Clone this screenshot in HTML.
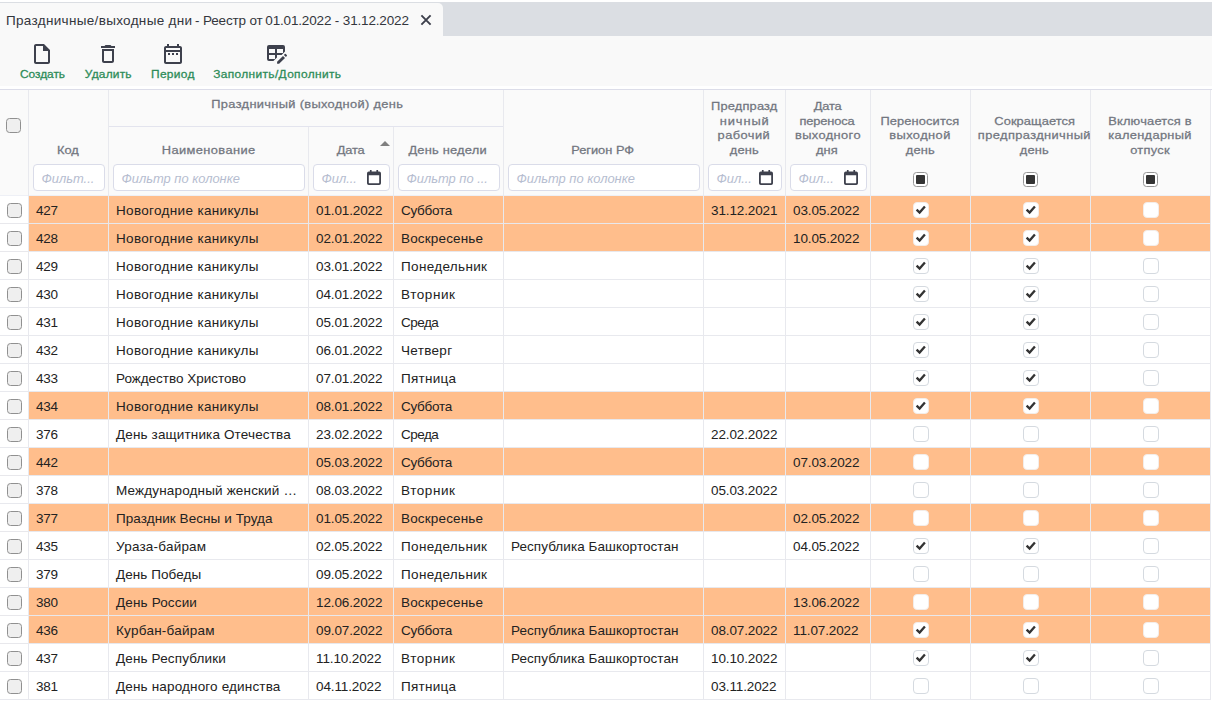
<!DOCTYPE html>
<html lang="ru"><head><meta charset="utf-8"><title>Праздничные/выходные дни</title>
<style>
*{box-sizing:border-box;margin:0;padding:0}
html,body{width:1212px;height:702px;overflow:hidden;background:#fff}
body{position:relative;font-family:"Liberation Sans",sans-serif;font-size:13.5px;color:#222;-webkit-font-smoothing:antialiased}
.tabbar{position:absolute;left:0;top:2px;width:1212px;height:34px;background:#dbdee3}
.tab{position:absolute;left:0;top:1px;width:443px;height:33px;background:#f9f9f9;border-top-right-radius:5px}
.tab .tt{position:absolute;left:6px;top:1px;line-height:33px;white-space:nowrap;color:#33363d;letter-spacing:0}
.tab svg{position:absolute;left:420px;top:11px;width:12px;height:12px}
.toolbar{position:absolute;left:0;top:36px;width:1212px;height:50px;background:#f9f9f9}
.ic{position:absolute;top:6px;width:24px;height:24px;fill:#3e414d}
.bl{position:absolute;width:200px;text-align:center;top:31px;line-height:15px;font-size:10.85px;color:#2d8c58;white-space:nowrap;-webkit-text-stroke:0.28px #2d8c58}
.hline{position:absolute;left:0;height:1px;background:#dcdde9}
.head{position:absolute;left:0;top:90px;width:1210px;height:105px;background:#fafafa}
.hl{position:absolute;width:200px;text-align:center;font-size:11.7px;color:#72767f;line-height:14px;white-space:nowrap;-webkit-text-stroke:0.27px #72767f}
.hl span{display:inline-block;transform:scaleX(1.1)}
.bl span{display:inline-block;transform:scaleX(1.1)}
.fi{position:absolute;top:164px;height:27px;border:1px solid #dadce9;border-radius:4px;background:#fff;font-style:italic;color:#b6bdd0;font-size:12.9px;line-height:27px;padding-left:7.5px;white-space:nowrap;overflow:hidden}
.fi svg{position:absolute;right:8px;top:5px;width:14px;height:15px;fill:#3e414d}
.hcb{position:absolute;width:15px;height:15px;border:1px solid #909090;border-radius:3.5px;background:#efefef}
.icb{position:absolute;top:172px;width:15px;height:15px;border:1px solid #969696;border-radius:3.5px;background:#fff}
.icb i{position:absolute;left:2px;top:2px;width:9px;height:9px;background:#333;border-radius:1px}
.sort{position:absolute;left:380px;top:141px;width:0;height:0;border-left:5px solid transparent;border-right:5px solid transparent;border-bottom:5px solid #808080}
.body{position:absolute;left:0;top:0;width:1212px;height:702px}
.row{position:absolute;left:0;width:1210px;height:28px;border-bottom:1px solid #e8e9ee}
.row .c{position:absolute;top:0;height:27px;line-height:29px;white-space:nowrap;overflow:hidden;padding-left:7px}
.row.o .c{background:#ffbe8c}
.row.o{border-bottom-color:#e8e8ec}
.row .c0{left:0;width:28px;padding:0;background:#fff !important}
.row .d{letter-spacing:-0.12px;padding-left:7px}
.row .b{padding:0}
.cb0{position:absolute;left:7px;top:7px;width:15px;height:15px;border:1px solid #909090;border-radius:3.5px;background:#efefef}
.cb{position:absolute;left:50%;margin-left:-8px;top:6px;width:16px;height:16px;border:1px solid #d5dae0;border-radius:4px;background:#fff}
.row.o .cb{border-color:#f3ede9}
.cb svg{position:absolute;left:-1px;top:-1px;width:16px;height:16px;fill:none;stroke:#333;stroke-width:2.3}
.vl{position:absolute;top:90px;width:1px;height:610px;background:#e8e9ee}
.row .k{letter-spacing:-0.2px}
</style></head>
<body>
<div class="tabbar"><div class="tab"><span class="tt" style="left:5.900px;letter-spacing:0.33px">Праздничные/выходные дни </span><span class="tt" style="left:195px;letter-spacing:-0.15px">- Реестр от </span><span class="tt" style="left:265.300px;letter-spacing:-0.16px">01.01.2022 - 31.12.2022</span><svg viewBox="0 0 12 12"><path d="M1.400 1.400 10.600 10.600M10.600 1.400 1.400 10.600" stroke="#3c3f4b" stroke-width="1.900" fill="none"/></svg></div></div>
<div class="toolbar">
<svg class="ic" style="left:30px" viewBox="0 0 24 24"><path d="M14 2H6c-1.100 0-1.990.9-1.990 2L4 20c0 1.100.89 2 1.990 2H18c1.100 0 2-.9 2-2V8l-6-6zM6 20V4h7v5h5v11H6z"/></svg><div class="bl" style="left:-57.35px"><span style="letter-spacing:-0.04px;margin-left:-0.04px">Создать</span></div>
<svg class="ic" style="left:96px" viewBox="0 0 24 24"><path d="M6 19c0 1.100.9 2 2 2h8c1.100 0 2-.9 2-2V7H6v12zM8 9h8v10H8V9zm7.500-5l-1-1h-5l-1 1H5v2h14V4h-3.500z"/></svg><div class="bl" style="left:8px"><span style="letter-spacing:0.17px;margin-left:0.17px">Удалить</span></div>
<svg class="ic" style="left:161px" viewBox="0 0 24 24"><path d="M7 11h2v2H7v-2zm14-5v14c0 1.100-.9 2-2 2H5c-1.110 0-2-.9-2-2l.01-14c0-1.100.88-2 1.990-2h1V2h2v2h8V2h2v2h1c1.100 0 2 .9 2 2zM5 8h14V6H5v2zm14 12V10H5v10h14zm-4-7h2v-2h-2v2zm-4 0h2v-2h-2v2z"/></svg><div class="bl" style="left:72.75px"><span style="letter-spacing:0.27px;margin-left:0.27px">Период</span></div>
<svg class="ic" style="left:265px" viewBox="0 0 24 24"><path fill-rule="evenodd" d="M4 3h14a2 2 0 0 1 2 2v4.600l-3.400 3.400H12v2.400L8.400 19H4a2 2 0 0 1-2-2V5a2 2 0 0 1 2-2zM4 7v4h6V7zM12 7v4h6V7zM4 13v4h6v-4z"/><path d="M12.100 21.800v-2l5.900-5.900 2 2-5.900 5.900zM18.900 13l.9-.9a.7.7 0 0 1 1 0l1 1a.7.7 0 0 1 0 1l-.9.900z"/></svg><div class="bl" style="left:176.9px"><span style="letter-spacing:0.32px;margin-left:0.32px">Заполнить/Дополнить</span></div>
</div>
<div class="hline" style="top:89px;width:1212px"></div>
<div class="head"></div>
<div class="hline" style="top:126px;left:109px;width:394px;background:#e3e4ee"></div>
<div class="hline" style="top:195px;width:1210px;background:#eef0f6"></div>
<div class="hcb" style="left:6px;top:118px"></div>
<div class="hl" style="left:-32.05px;top:143px"><span style="letter-spacing:-0.05px;margin-left:-0.05px">Код</span></div>
<div class="hl" style="left:207px;top:97px"><span style="letter-spacing:0.29px;margin-left:0.29px">Праздничный (выходной) день</span></div>
<div class="hl" style="left:108px;top:143px"><span style="letter-spacing:0.36px;margin-left:0.36px">Наименование</span></div>
<div class="hl" style="left:250.3px;top:143px"><span style="letter-spacing:-0.15px;margin-left:-0.15px">Дата</span></div>
<div class="hl" style="left:348px;top:143px"><span style="letter-spacing:0.19px;margin-left:0.19px">День недели</span></div>
<div class="hl" style="left:503px;top:143px"><span style="letter-spacing:-0.01px;margin-left:-0.01px">Регион РФ</span></div>
<div class="hl" style="left:644.4px;top:99px"><span style="letter-spacing:0.16px;margin-left:0.16px">Предпразд</span></div>
<div class="hl" style="left:644.175px;top:114px"><span style="letter-spacing:0.83px;margin-left:0.83px">ничный</span></div>
<div class="hl" style="left:643.95px;top:128px"><span style="letter-spacing:0.39px;margin-left:0.39px">рабочий</span></div>
<div class="hl" style="left:643.95px;top:143px"><span style="letter-spacing:0.21px;margin-left:0.21px">день</span></div>
<div class="hl" style="left:727.3px;top:99px"><span style="letter-spacing:-0.15px;margin-left:-0.15px">Дата</span></div>
<div class="hl" style="left:727.35px;top:114px"><span style="letter-spacing:-0.13px;margin-left:-0.13px">переноса</span></div>
<div class="hl" style="left:727.6px;top:128px"><span style="letter-spacing:0.34px;margin-left:0.34px">выходного</span></div>
<div class="hl" style="left:727.35px;top:143px"><span style="letter-spacing:0.05px;margin-left:0.05px">дня</span></div>
<div class="hl" style="left:820.2px;top:114px"><span style="letter-spacing:0.11px;margin-left:0.11px">Переносится</span></div>
<div class="hl" style="left:820.15px;top:128px"><span style="letter-spacing:0.39px;margin-left:0.39px">выходной</span></div>
<div class="hl" style="left:819.9px;top:143px"><span style="letter-spacing:0.21px;margin-left:0.21px">день</span></div>
<div class="hl" style="left:934.4px;top:114px"><span style="letter-spacing:0.06px;margin-left:0.06px">Сокращается</span></div>
<div class="hl" style="left:933.8px;top:128px"><span style="letter-spacing:0.35px;margin-left:0.35px">предпраздничный</span></div>
<div class="hl" style="left:934px;top:143px"><span style="letter-spacing:0.21px;margin-left:0.21px">день</span></div>
<div class="hl" style="left:1050.05px;top:114px"><span style="letter-spacing:0.17px;margin-left:0.17px">Включается в</span></div>
<div class="hl" style="left:1050.05px;top:128px"><span style="letter-spacing:0.29px;margin-left:0.29px">календарный</span></div>
<div class="hl" style="left:1049.9px;top:143px"><span style="letter-spacing:0.24px;margin-left:0.24px">отпуск</span></div>
<div class="sort"></div>
<div class="fi" style="left:33px;width:72px">Фильт...</div>
<div class="fi" style="left:113px;width:192px">Фильтр по колонке</div>
<div class="fi" style="left:313px;width:77px">Фил...<svg viewBox="0 0 14 15"><path fill-rule="evenodd" d="M2.900 0h1.700v1.600h4.800V0h1.700v1.600h1.100a1.800 1.800 0 0 1 1.800 1.800v9.800a1.800 1.800 0 0 1-1.800 1.800H1.800A1.800 1.800 0 0 1 0 13.200V3.400a1.800 1.800 0 0 1 1.800-1.800h1.100zM1.800 5.300v7.500a.4.4 0 0 0 .4.4h9.600a.4.4 0 0 0 .4-.4V5.300z"/></svg></div>
<div class="fi" style="left:398px;width:102px">Фильтр по ...</div>
<div class="fi" style="left:508px;width:192px">Фильтр по колонке</div>
<div class="fi" style="left:708px;width:74px">Фил...<svg viewBox="0 0 14 15"><path fill-rule="evenodd" d="M2.900 0h1.700v1.600h4.800V0h1.700v1.600h1.100a1.800 1.800 0 0 1 1.800 1.800v9.800a1.800 1.800 0 0 1-1.800 1.800H1.800A1.800 1.800 0 0 1 0 13.200V3.400a1.800 1.800 0 0 1 1.800-1.800h1.100zM1.800 5.300v7.500a.4.4 0 0 0 .4.4h9.600a.4.4 0 0 0 .4-.4V5.300z"/></svg></div>
<div class="fi" style="left:790px;width:77px">Фил...<svg viewBox="0 0 14 15"><path fill-rule="evenodd" d="M2.900 0h1.700v1.600h4.800V0h1.700v1.600h1.100a1.800 1.800 0 0 1 1.800 1.800v9.800a1.800 1.800 0 0 1-1.800 1.800H1.800A1.800 1.800 0 0 1 0 13.200V3.400a1.800 1.800 0 0 1 1.800-1.800h1.100zM1.800 5.300v7.500a.4.4 0 0 0 .4.4h9.600a.4.4 0 0 0 .4-.4V5.300z"/></svg></div>
<div class="icb" style="left:913px"><i></i></div>
<div class="icb" style="left:1023px"><i></i></div>
<div class="icb" style="left:1143px"><i></i></div>
<div class="body">
<div class="row o" style="top:196px"><div class="c c0"><span class="cb0"></span></div><div class="c k" style="left:29px;width:79px">427</div><div class="c t" style="left:109px;width:199px;letter-spacing:0.33px">Новогодние каникулы</div><div class="c d" style="left:309px;width:84px">01.01.2022</div><div class="c t" style="left:394px;width:109px;letter-spacing:-0.28px">Суббота</div><div class="c t" style="left:504px;width:199px"></div><div class="c d" style="left:704px;width:81px">31.12.2021</div><div class="c d" style="left:786px;width:84px">03.05.2022</div><div class="c b" style="left:871px;width:99px"><span class="cb on"><svg viewBox="0 0 16 16"><path d="M3.600 7.600 6.600 10.600 11.900 4.400"/></svg></span></div><div class="c b" style="left:971px;width:119px"><span class="cb on"><svg viewBox="0 0 16 16"><path d="M3.600 7.600 6.600 10.600 11.900 4.400"/></svg></span></div><div class="c b" style="left:1091px;width:119px"><span class="cb"></span></div></div>
<div class="row o" style="top:224px"><div class="c c0"><span class="cb0"></span></div><div class="c k" style="left:29px;width:79px">428</div><div class="c t" style="left:109px;width:199px;letter-spacing:0.33px">Новогодние каникулы</div><div class="c d" style="left:309px;width:84px">02.01.2022</div><div class="c t" style="left:394px;width:109px;letter-spacing:0.16px">Воскресенье</div><div class="c t" style="left:504px;width:199px"></div><div class="c d" style="left:704px;width:81px"></div><div class="c d" style="left:786px;width:84px">10.05.2022</div><div class="c b" style="left:871px;width:99px"><span class="cb on"><svg viewBox="0 0 16 16"><path d="M3.600 7.600 6.600 10.600 11.900 4.400"/></svg></span></div><div class="c b" style="left:971px;width:119px"><span class="cb on"><svg viewBox="0 0 16 16"><path d="M3.600 7.600 6.600 10.600 11.900 4.400"/></svg></span></div><div class="c b" style="left:1091px;width:119px"><span class="cb"></span></div></div>
<div class="row" style="top:252px"><div class="c c0"><span class="cb0"></span></div><div class="c k" style="left:29px;width:79px">429</div><div class="c t" style="left:109px;width:199px;letter-spacing:0.33px">Новогодние каникулы</div><div class="c d" style="left:309px;width:84px">03.01.2022</div><div class="c t" style="left:394px;width:109px;letter-spacing:0.34px">Понедельник</div><div class="c t" style="left:504px;width:199px"></div><div class="c d" style="left:704px;width:81px"></div><div class="c d" style="left:786px;width:84px"></div><div class="c b" style="left:871px;width:99px"><span class="cb on"><svg viewBox="0 0 16 16"><path d="M3.600 7.600 6.600 10.600 11.900 4.400"/></svg></span></div><div class="c b" style="left:971px;width:119px"><span class="cb on"><svg viewBox="0 0 16 16"><path d="M3.600 7.600 6.600 10.600 11.900 4.400"/></svg></span></div><div class="c b" style="left:1091px;width:119px"><span class="cb"></span></div></div>
<div class="row" style="top:280px"><div class="c c0"><span class="cb0"></span></div><div class="c k" style="left:29px;width:79px">430</div><div class="c t" style="left:109px;width:199px;letter-spacing:0.33px">Новогодние каникулы</div><div class="c d" style="left:309px;width:84px">04.01.2022</div><div class="c t" style="left:394px;width:109px;letter-spacing:0.58px">Вторник</div><div class="c t" style="left:504px;width:199px"></div><div class="c d" style="left:704px;width:81px"></div><div class="c d" style="left:786px;width:84px"></div><div class="c b" style="left:871px;width:99px"><span class="cb on"><svg viewBox="0 0 16 16"><path d="M3.600 7.600 6.600 10.600 11.900 4.400"/></svg></span></div><div class="c b" style="left:971px;width:119px"><span class="cb on"><svg viewBox="0 0 16 16"><path d="M3.600 7.600 6.600 10.600 11.900 4.400"/></svg></span></div><div class="c b" style="left:1091px;width:119px"><span class="cb"></span></div></div>
<div class="row" style="top:308px"><div class="c c0"><span class="cb0"></span></div><div class="c k" style="left:29px;width:79px">431</div><div class="c t" style="left:109px;width:199px;letter-spacing:0.33px">Новогодние каникулы</div><div class="c d" style="left:309px;width:84px">05.01.2022</div><div class="c t" style="left:394px;width:109px;letter-spacing:-0.53px">Среда</div><div class="c t" style="left:504px;width:199px"></div><div class="c d" style="left:704px;width:81px"></div><div class="c d" style="left:786px;width:84px"></div><div class="c b" style="left:871px;width:99px"><span class="cb on"><svg viewBox="0 0 16 16"><path d="M3.600 7.600 6.600 10.600 11.900 4.400"/></svg></span></div><div class="c b" style="left:971px;width:119px"><span class="cb on"><svg viewBox="0 0 16 16"><path d="M3.600 7.600 6.600 10.600 11.900 4.400"/></svg></span></div><div class="c b" style="left:1091px;width:119px"><span class="cb"></span></div></div>
<div class="row" style="top:336px"><div class="c c0"><span class="cb0"></span></div><div class="c k" style="left:29px;width:79px">432</div><div class="c t" style="left:109px;width:199px;letter-spacing:0.33px">Новогодние каникулы</div><div class="c d" style="left:309px;width:84px">06.01.2022</div><div class="c t" style="left:394px;width:109px;letter-spacing:0.32px">Четверг</div><div class="c t" style="left:504px;width:199px"></div><div class="c d" style="left:704px;width:81px"></div><div class="c d" style="left:786px;width:84px"></div><div class="c b" style="left:871px;width:99px"><span class="cb on"><svg viewBox="0 0 16 16"><path d="M3.600 7.600 6.600 10.600 11.900 4.400"/></svg></span></div><div class="c b" style="left:971px;width:119px"><span class="cb on"><svg viewBox="0 0 16 16"><path d="M3.600 7.600 6.600 10.600 11.900 4.400"/></svg></span></div><div class="c b" style="left:1091px;width:119px"><span class="cb"></span></div></div>
<div class="row" style="top:364px"><div class="c c0"><span class="cb0"></span></div><div class="c k" style="left:29px;width:79px">433</div><div class="c t" style="left:109px;width:199px;letter-spacing:-0.02px">Рождество Христово</div><div class="c d" style="left:309px;width:84px">07.01.2022</div><div class="c t" style="left:394px;width:109px;letter-spacing:0.28px">Пятница</div><div class="c t" style="left:504px;width:199px"></div><div class="c d" style="left:704px;width:81px"></div><div class="c d" style="left:786px;width:84px"></div><div class="c b" style="left:871px;width:99px"><span class="cb on"><svg viewBox="0 0 16 16"><path d="M3.600 7.600 6.600 10.600 11.900 4.400"/></svg></span></div><div class="c b" style="left:971px;width:119px"><span class="cb on"><svg viewBox="0 0 16 16"><path d="M3.600 7.600 6.600 10.600 11.900 4.400"/></svg></span></div><div class="c b" style="left:1091px;width:119px"><span class="cb"></span></div></div>
<div class="row o" style="top:392px"><div class="c c0"><span class="cb0"></span></div><div class="c k" style="left:29px;width:79px">434</div><div class="c t" style="left:109px;width:199px;letter-spacing:0.33px">Новогодние каникулы</div><div class="c d" style="left:309px;width:84px">08.01.2022</div><div class="c t" style="left:394px;width:109px;letter-spacing:-0.28px">Суббота</div><div class="c t" style="left:504px;width:199px"></div><div class="c d" style="left:704px;width:81px"></div><div class="c d" style="left:786px;width:84px"></div><div class="c b" style="left:871px;width:99px"><span class="cb on"><svg viewBox="0 0 16 16"><path d="M3.600 7.600 6.600 10.600 11.900 4.400"/></svg></span></div><div class="c b" style="left:971px;width:119px"><span class="cb on"><svg viewBox="0 0 16 16"><path d="M3.600 7.600 6.600 10.600 11.900 4.400"/></svg></span></div><div class="c b" style="left:1091px;width:119px"><span class="cb"></span></div></div>
<div class="row" style="top:420px"><div class="c c0"><span class="cb0"></span></div><div class="c k" style="left:29px;width:79px">376</div><div class="c t" style="left:109px;width:199px;letter-spacing:0.14px">День защитника Отечества</div><div class="c d" style="left:309px;width:84px">23.02.2022</div><div class="c t" style="left:394px;width:109px;letter-spacing:-0.53px">Среда</div><div class="c t" style="left:504px;width:199px"></div><div class="c d" style="left:704px;width:81px">22.02.2022</div><div class="c d" style="left:786px;width:84px"></div><div class="c b" style="left:871px;width:99px"><span class="cb"></span></div><div class="c b" style="left:971px;width:119px"><span class="cb"></span></div><div class="c b" style="left:1091px;width:119px"><span class="cb"></span></div></div>
<div class="row o" style="top:448px"><div class="c c0"><span class="cb0"></span></div><div class="c k" style="left:29px;width:79px">442</div><div class="c t" style="left:109px;width:199px"></div><div class="c d" style="left:309px;width:84px">05.03.2022</div><div class="c t" style="left:394px;width:109px;letter-spacing:-0.28px">Суббота</div><div class="c t" style="left:504px;width:199px"></div><div class="c d" style="left:704px;width:81px"></div><div class="c d" style="left:786px;width:84px">07.03.2022</div><div class="c b" style="left:871px;width:99px"><span class="cb"></span></div><div class="c b" style="left:971px;width:119px"><span class="cb"></span></div><div class="c b" style="left:1091px;width:119px"><span class="cb"></span></div></div>
<div class="row" style="top:476px"><div class="c c0"><span class="cb0"></span></div><div class="c k" style="left:29px;width:79px">378</div><div class="c t" style="left:109px;width:199px;letter-spacing:0.16px">Международный женский …</div><div class="c d" style="left:309px;width:84px">08.03.2022</div><div class="c t" style="left:394px;width:109px;letter-spacing:0.58px">Вторник</div><div class="c t" style="left:504px;width:199px"></div><div class="c d" style="left:704px;width:81px">05.03.2022</div><div class="c d" style="left:786px;width:84px"></div><div class="c b" style="left:871px;width:99px"><span class="cb"></span></div><div class="c b" style="left:971px;width:119px"><span class="cb"></span></div><div class="c b" style="left:1091px;width:119px"><span class="cb"></span></div></div>
<div class="row o" style="top:504px"><div class="c c0"><span class="cb0"></span></div><div class="c k" style="left:29px;width:79px">377</div><div class="c t" style="left:109px;width:199px;letter-spacing:0.07px">Праздник Весны и Труда</div><div class="c d" style="left:309px;width:84px">01.05.2022</div><div class="c t" style="left:394px;width:109px;letter-spacing:0.16px">Воскресенье</div><div class="c t" style="left:504px;width:199px"></div><div class="c d" style="left:704px;width:81px"></div><div class="c d" style="left:786px;width:84px">02.05.2022</div><div class="c b" style="left:871px;width:99px"><span class="cb"></span></div><div class="c b" style="left:971px;width:119px"><span class="cb"></span></div><div class="c b" style="left:1091px;width:119px"><span class="cb"></span></div></div>
<div class="row" style="top:532px"><div class="c c0"><span class="cb0"></span></div><div class="c k" style="left:29px;width:79px">435</div><div class="c t" style="left:109px;width:199px;letter-spacing:0.21px">Ураза-байрам</div><div class="c d" style="left:309px;width:84px">02.05.2022</div><div class="c t" style="left:394px;width:109px;letter-spacing:0.34px">Понедельник</div><div class="c t" style="left:504px;width:199px;letter-spacing:0.06px">Республика Башкортостан</div><div class="c d" style="left:704px;width:81px"></div><div class="c d" style="left:786px;width:84px">04.05.2022</div><div class="c b" style="left:871px;width:99px"><span class="cb on"><svg viewBox="0 0 16 16"><path d="M3.600 7.600 6.600 10.600 11.900 4.400"/></svg></span></div><div class="c b" style="left:971px;width:119px"><span class="cb on"><svg viewBox="0 0 16 16"><path d="M3.600 7.600 6.600 10.600 11.900 4.400"/></svg></span></div><div class="c b" style="left:1091px;width:119px"><span class="cb"></span></div></div>
<div class="row" style="top:560px"><div class="c c0"><span class="cb0"></span></div><div class="c k" style="left:29px;width:79px">379</div><div class="c t" style="left:109px;width:199px;letter-spacing:0.07px">День Победы</div><div class="c d" style="left:309px;width:84px">09.05.2022</div><div class="c t" style="left:394px;width:109px;letter-spacing:0.34px">Понедельник</div><div class="c t" style="left:504px;width:199px"></div><div class="c d" style="left:704px;width:81px"></div><div class="c d" style="left:786px;width:84px"></div><div class="c b" style="left:871px;width:99px"><span class="cb"></span></div><div class="c b" style="left:971px;width:119px"><span class="cb"></span></div><div class="c b" style="left:1091px;width:119px"><span class="cb"></span></div></div>
<div class="row o" style="top:588px"><div class="c c0"><span class="cb0"></span></div><div class="c k" style="left:29px;width:79px">380</div><div class="c t" style="left:109px;width:199px;letter-spacing:0.15px">День России</div><div class="c d" style="left:309px;width:84px">12.06.2022</div><div class="c t" style="left:394px;width:109px;letter-spacing:0.16px">Воскресенье</div><div class="c t" style="left:504px;width:199px"></div><div class="c d" style="left:704px;width:81px"></div><div class="c d" style="left:786px;width:84px">13.06.2022</div><div class="c b" style="left:871px;width:99px"><span class="cb"></span></div><div class="c b" style="left:971px;width:119px"><span class="cb"></span></div><div class="c b" style="left:1091px;width:119px"><span class="cb"></span></div></div>
<div class="row o" style="top:616px"><div class="c c0"><span class="cb0"></span></div><div class="c k" style="left:29px;width:79px">436</div><div class="c t" style="left:109px;width:199px;letter-spacing:0.25px">Курбан-байрам</div><div class="c d" style="left:309px;width:84px">09.07.2022</div><div class="c t" style="left:394px;width:109px;letter-spacing:-0.28px">Суббота</div><div class="c t" style="left:504px;width:199px;letter-spacing:0.06px">Республика Башкортостан</div><div class="c d" style="left:704px;width:81px">08.07.2022</div><div class="c d" style="left:786px;width:84px">11.07.2022</div><div class="c b" style="left:871px;width:99px"><span class="cb on"><svg viewBox="0 0 16 16"><path d="M3.600 7.600 6.600 10.600 11.900 4.400"/></svg></span></div><div class="c b" style="left:971px;width:119px"><span class="cb on"><svg viewBox="0 0 16 16"><path d="M3.600 7.600 6.600 10.600 11.900 4.400"/></svg></span></div><div class="c b" style="left:1091px;width:119px"><span class="cb"></span></div></div>
<div class="row" style="top:644px"><div class="c c0"><span class="cb0"></span></div><div class="c k" style="left:29px;width:79px">437</div><div class="c t" style="left:109px;width:199px;letter-spacing:0.14px">День Республики</div><div class="c d" style="left:309px;width:84px">11.10.2022</div><div class="c t" style="left:394px;width:109px;letter-spacing:0.58px">Вторник</div><div class="c t" style="left:504px;width:199px;letter-spacing:0.06px">Республика Башкортостан</div><div class="c d" style="left:704px;width:81px">10.10.2022</div><div class="c d" style="left:786px;width:84px"></div><div class="c b" style="left:871px;width:99px"><span class="cb on"><svg viewBox="0 0 16 16"><path d="M3.600 7.600 6.600 10.600 11.900 4.400"/></svg></span></div><div class="c b" style="left:971px;width:119px"><span class="cb on"><svg viewBox="0 0 16 16"><path d="M3.600 7.600 6.600 10.600 11.900 4.400"/></svg></span></div><div class="c b" style="left:1091px;width:119px"><span class="cb"></span></div></div>
<div class="row" style="top:672px"><div class="c c0"><span class="cb0"></span></div><div class="c k" style="left:29px;width:79px">381</div><div class="c t" style="left:109px;width:199px;letter-spacing:0.16px">День народного единства</div><div class="c d" style="left:309px;width:84px">04.11.2022</div><div class="c t" style="left:394px;width:109px;letter-spacing:0.28px">Пятница</div><div class="c t" style="left:504px;width:199px"></div><div class="c d" style="left:704px;width:81px">03.11.2022</div><div class="c d" style="left:786px;width:84px"></div><div class="c b" style="left:871px;width:99px"><span class="cb"></span></div><div class="c b" style="left:971px;width:119px"><span class="cb"></span></div><div class="c b" style="left:1091px;width:119px"><span class="cb"></span></div></div>
</div>
<div class="vl" style="left:28px"></div><div class="vl" style="left:108px"></div><div class="vl" style="left:308px;top:127px;height:573px"></div><div class="vl" style="left:393px;top:127px;height:573px"></div><div class="vl" style="left:503px"></div><div class="vl" style="left:703px"></div><div class="vl" style="left:785px"></div><div class="vl" style="left:870px"></div><div class="vl" style="left:970px"></div><div class="vl" style="left:1090px"></div><div class="vl" style="left:1210px"></div>
</body></html>
